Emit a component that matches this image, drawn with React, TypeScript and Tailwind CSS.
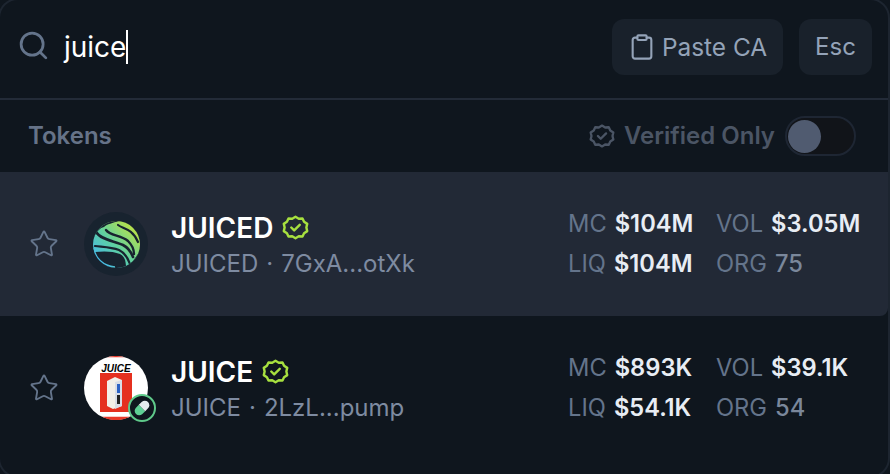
import { Clipboard, Search, Star } from "lucide-react";
import type { FC, ReactNode } from "react";

const BadgeCheck: FC<{ className?: string }> = ({ className }) => (
    <svg viewBox="0 0 24 24" fill="none" stroke="currentColor" strokeWidth="2" strokeLinecap="round" strokeLinejoin="round" className={className}>
        <path d="M12 2.2l2.7 1.6 3.1-.2 1.3 2.8 2.6 1.7-.7 3 .7 3-2.6 1.7-1.3 2.8-3.1-.2L12 20l-2.7-1.6-3.1.2-1.3-2.8-2.6-1.7.7-3-.7-3 2.6-1.7 1.3-2.8 3.1.2Z" transform="translate(0 0.9)" />
        <path d="m8.5 12 2.4 2.4 4.6-4.6" />
    </svg>
);

const JuicedLogo = () => (
    <div className="w-16 h-16 rounded-full bg-[#18232f] flex items-center justify-center">
        <svg viewBox="0 0 47 47" className="w-[47px] h-[47px]">
            <defs>
                <linearGradient id="juiced" gradientUnits="userSpaceOnUse" x1="6" y1="42" x2="40" y2="8">
                    <stop offset="0" stopColor="#45b8ea" />
                    <stop offset="0.5" stopColor="#5fd0a0" />
                    <stop offset="1" stopColor="#b4e04e" />
                </linearGradient>
                <clipPath id="juicedClip">
                    <circle cx="23.5" cy="23.5" r="23.5" />
                </clipPath>
            </defs>
            <g clipPath="url(#juicedClip)">
                <rect width="47" height="47" fill="url(#juiced)" />
                <path d="M0 0h26C20 2 14 3 11 6 7 7 4 10 2 14L0 18Z" fill="#18232f" />
                <g fill="none" stroke="#18232f" strokeLinecap="round">
                    <path d="M13 9c4 6 15 5 22 11 4 4 6 8 6 13" strokeWidth="2.4" />
                    <path d="M25 4c5 4 14 3 20 17" strokeWidth="2.2" />
                    <path d="M3 11c5 8 19 9 27 13 6 3 8 7 10 12" strokeWidth="2.6" />
                    <path d="M2 25c8 1 16 1 24 4 6 3 9 8 11 14" strokeWidth="2.2" />
                </g>
                <path d="M2 31c8-1 18-1 25 2 4 2 6 6 6 14H0Z" fill="#18232f" />
                <path d="M40 40 35 47h12V30Z" fill="#18232f" />
                <path d="M1 27C2 37 10 45 22 46" fill="none" stroke="url(#juiced)" strokeWidth="1.4" />
            </g>
        </svg>
    </div>
);

const JuiceLogo = () => (
    <div className="relative w-16 h-16">
        <svg viewBox="0 0 64 64" className="w-16 h-16">
            <circle cx="32" cy="32" r="32" fill="#ffffff" />
            <path d="M23 1.3A32 32 0 0 1 41 1.3Z" fill="#e8392a" />
            <path d="M18 60.8A32 32 0 0 0 46 60.8Z" fill="#e8392a" />
            <text x="32" y="15.5" textAnchor="middle" fontFamily="Liberation Sans, sans-serif" fontWeight="700" fontStyle="italic" fontSize="10" fill="#000000">JUICE</text>
            <rect x="16" y="17" width="32" height="39" fill="#e5301f" />
            <path d="M23 25l8-4 7 3v26l-9 3-6-3Z" fill="#f2efe8" />
            <path d="M31 26l7-2v26l-7 3Z" fill="#d8dde6" />
            <rect x="33" y="28" width="3" height="9" fill="#2c62c4" />
            <rect x="33" y="39" width="3" height="9" fill="#222222" />
        </svg>
        <div className="absolute -right-[8px] -bottom-[2px] w-[28px] h-[28px] rounded-full bg-[#0f161e] border-2 border-[#5fc98a] flex items-center justify-center">
            <svg viewBox="0 0 20 20" className="w-[20px] h-[20px]">
                <g transform="rotate(-45 10 10)">
                    <path d="M10 5.5H6a4.5 4.5 0 0 0 0 9h4Z" fill="#5ecf94" />
                    <path d="M10 5.5h4a4.5 4.5 0 0 1 0 9h-4Z" fill="#e6ebee" />
                </g>
            </svg>
        </div>
    </div>
);

const Stat: FC<{ label: string; value: string; muted?: boolean }> = ({ label, value, muted }) => (
    <div className="flex items-center gap-[8px] whitespace-nowrap h-[40px]">
        <span className="text-[#64748b]">{label}</span>
        <span className={muted ? "text-[#7a879b] font-medium" : "text-[#e8edf4] font-semibold"}>{value}</span>
    </div>
);

type Token = {
    name: string;
    symbol: string;
    address: string;
    mc: string;
    liq: string;
    vol: string;
    org: string;
    logo: ReactNode;
    active?: boolean;
};

const tokens: Token[] = [
    { name: "JUICED", symbol: "JUICED", address: "7GxA...otXk", mc: "$104M", liq: "$104M", vol: "$3.05M", org: "75", logo: <JuicedLogo />, active: true },
    { name: "JUICE", symbol: "JUICE", address: "2LzL...pump", mc: "$893K", liq: "$54.1K", vol: "$39.1K", org: "54", logo: <JuiceLogo /> },
];

const TokenRow: FC<{ token: Token }> = ({ token }) => (
    <div className={`h-[144px] flex items-center rounded-br-lg ${token.active ? "bg-[#222936]" : ""}`}>
        <Star className="w-[30px] h-[30px] ml-[29px] text-[#64748b]" strokeWidth={1.5} />
        <div className="ml-[25px]">{token.logo}</div>
        <div className="ml-[23px] flex-1 mt-[3px]">
            <div className="flex items-center gap-[8px] h-[36px]">
                <span className="text-[28px] font-semibold text-white">{token.name}</span>
                <BadgeCheck className="w-[29px] h-[29px] text-[#a7e03f]" />
            </div>
            <div className="flex text-[24px] leading-[36px] text-[#7e8ba1]">
                {token.symbol}
                <span className="mx-[8px]">·</span>
                {token.address}
            </div>
        </div>
        <div className="w-[320px] grid grid-cols-[148px_172px] text-[23.7px]">
            <Stat label="MC" value={token.mc} />
            <Stat label="VOL" value={token.vol} />
            <Stat label="LIQ" value={token.liq} />
            <Stat label="ORG" value={token.org} muted />
        </div>
    </div>
);

export default function App() {
    return (
        <div className="w-[890px] h-[474px] overflow-hidden bg-[#0f161e] font-['Inter',sans-serif]">
            <div className="w-[892px] h-[480px] -mt-[2px] -ml-[2px] border-2 border-[#1d2530] rounded-[20px]">
                <div className="h-[100px] border-b-2 border-[#232b38] flex items-center pl-[20px] pr-[16px] pb-[4px]">
                    <Search className="w-[33px] h-[33px] -ml-[3px] -mt-[3px] text-[#64748b]" strokeWidth={2} />
                    <div className="ml-[14px] flex-1 flex items-center h-[34px] text-[28px] text-white">
                        juice
                        <span className="w-[2px] h-[34px] bg-white" />
                    </div>
                    <button className="w-[171px] h-[56px] rounded-xl bg-[#19212b] flex items-center justify-center gap-[6px] text-[24.4px] text-[#94a3b8]">
                        <Clipboard className="w-[28px] h-[28px]" strokeWidth={1.8} />
                        Paste CA
                    </button>
                    <button className="ml-[16px] w-[73px] h-[56px] rounded-xl bg-[#19212b] text-[24px] text-[#94a3b8]">Esc</button>
                </div>
                <div className="h-[72px] flex items-center pl-[28px] pr-[32px]">
                    <span className="flex-1 text-[24px] font-semibold text-[#667388]">Tokens</span>
                    <BadgeCheck className="w-[28px] h-[28px] text-[#4b5565]" />
                    <span className="ml-[8px] text-[24px] font-semibold text-[#4b5565]">Verified Only</span>
                    <div className="ml-[10px] w-[71px] h-[40px] rounded-full bg-[#111419] border-2 border-[#1e2633] flex items-center pl-[1px]">
                        <div className="w-[33px] h-[33px] rounded-full bg-[#505b70]" />
                    </div>
                </div>
                {tokens.map((token) => (
                    <TokenRow key={token.name} token={token} />
                ))}
            </div>
        </div>
    );
}
